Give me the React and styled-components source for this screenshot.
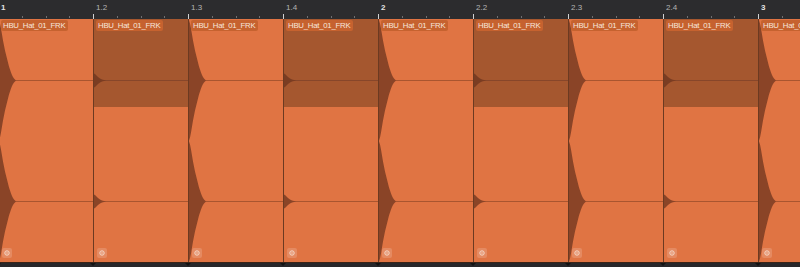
import React from "react";
import styled, { createGlobalStyle } from "styled-components";

const BAR = 95;

const bars = ["1", "1.2", "1.3", "1.4", "2", "2.2", "2.3", "2.4", "3"];

const GlobalStyle = createGlobalStyle`
  html, body {
    margin: 0;
    padding: 0;
    background: #2b2b2d;
    overflow: hidden;
  }
  body {
    font-family: "Liberation Sans", Arial, sans-serif;
  }
`;

const Arrange = styled.div`
  width: 800px;
  height: 267px;
  display: flex;
  flex-direction: column;
  overflow: hidden;
  background: #2b2b2d;
`;

const Ruler = styled.div`
  height: 19px;
  display: flex;
  margin-left: -2px;
  flex: none;
  background: #2c2c2e;
`;

const RulerBar = styled.div`
  flex: 0 0 ${BAR}px;
  display: flex;
  flex-direction: column;
  justify-content: space-between;
`;

const BarNumber = styled.span`
  font-size: 8px;
  line-height: 1;
  padding: 4px 0 0 3px;
  color: ${(p) => (p.$main ? "#e4e4e4" : "#b4b4b4")};
  font-weight: ${(p) => (p.$main ? 700 : 400)};
`;

const Beats = styled.div`
  display: flex;
  height: 5px;
  align-items: flex-end;
`;

const Beat = styled.div`
  flex: 1;
  height: ${(p) => (p.$bar ? 5 : 2)}px;
  border-left: 1px solid ${(p) => (p.$bar ? "#d0d0d0" : "#707072")};
  margin-bottom: ${(p) => (p.$bar ? 0 : 1)}px;
`;

const Track = styled.div`
  height: 243px;
  display: flex;
  margin-left: -2px;
  flex: none;
  border-bottom: 1px solid #3a2418;
`;

const Clip = styled.div`
  flex: 0 0 ${BAR}px;
  position: relative;
  box-sizing: border-box;
  border-left: 1px solid #6c3a21;
  background: ${(p) =>
    p.$quiet
      ? "linear-gradient(to bottom, #a5572f 0 88px, #e07443 88px)"
      : "#e07443"};
`;

const Wave = styled.svg`
  display: block;
  width: 100%;
  height: 100%;
`;

const Label = styled.div`
  position: absolute;
  top: 1px;
  left: 2px;
  height: 11px;
  padding: 0 3px 0 2px;
  border-radius: 2px;
  background: #c6622f;
  color: #f6e6dc;
  font-size: 7.8px;
  letter-spacing: -0.25px;
  line-height: 11px;
  white-space: nowrap;
`;

const GearBox = styled.div`
  position: absolute;
  left: 3px;
  bottom: 4px;
  width: 10px;
  height: 10px;
  border-radius: 2px;
  background: rgba(255, 255, 255, 0.16);
  display: flex;
  align-items: center;
  justify-content: center;
`;

const Footer = styled.div`
  flex: 1;
  display: flex;
  margin-left: -2px;
  background: #27272a;
`;

const FootBar = styled.div`
  flex: 0 0 ${BAR}px;
  position: relative;
`;

const Notch = styled.div`
  position: absolute;
  left: -3px;
  top: 0;
  width: 0;
  height: 0;
  border-left: 3px solid transparent;
  border-right: 3px solid transparent;
  border-top: 3px solid #121212;
`;

// decay envelope of a hat hit: [x, distance from centre]
const loud = [
  [0, 60], [1, 57], [2, 52], [3, 46], [4, 40], [5, 35], [6, 30], [7, 26],
  [8, 22], [9, 18], [10, 14], [11, 11], [12, 8], [13, 5.5], [14, 3.5],
  [15, 2], [16, 1], [17, 0],
];
const soft = [
  [0, 7], [1, 6.5], [2, 5.5], [3, 4.5], [4, 3.5], [5, 2.8], [6, 2.1],
  [7, 1.6], [8, 1.1], [9, 0.7], [10, 0.4], [12, 0],
];

const hitPath = (pts, cy) => {
  const top = pts.map(([x, a]) => `${x},${cy - a}`);
  const bottom = [...pts].reverse().map(([x, a]) => `${x},${cy + a}`);
  return `M0,${cy} L${top.join(" L")} L${bottom.join(" L")} Z`;
};

const Waveform = ({ quiet }) => {
  const pts = quiet ? soft : loud;
  return (
    <Wave viewBox={`0 0 ${BAR - 1} 243`} preserveAspectRatio="none">
      <line x1="0" y1="61.5" x2={BAR} y2="61.5" stroke={quiet ? "#87462a" : "#a9552f"} strokeWidth="1" />
      <line x1="0" y1="182.5" x2={BAR} y2="182.5" stroke="#a9552f" strokeWidth="1" />
      <path d={hitPath(pts, 61.5)} fill={quiet ? "#7a3c22" : "#8a4427"} />
      <path d={hitPath(pts, 182.5)} fill="#8a4427" />
    </Wave>
  );
};

const Gear = () => (
  <GearBox>
    <svg width="6" height="6" viewBox="0 0 6 6">
      <circle cx="3" cy="3" r="2.2" fill="none" stroke="#f3d9cb" strokeWidth="1" />
      <circle cx="3" cy="3" r="0.7" fill="#f3d9cb" />
    </svg>
  </GearBox>
);

export default function App() {
  return (
    <>
      <GlobalStyle />
      <Arrange>
        <Ruler>
          {bars.map((b) => (
            <RulerBar key={b}>
              <BarNumber $main={!b.includes(".")}>{b}</BarNumber>
              <Beats>
                <Beat $bar />
                <Beat />
                <Beat />
                <Beat />
              </Beats>
            </RulerBar>
          ))}
        </Ruler>
        <Track>
          {bars.map((b, i) => (
            <Clip key={b} $quiet={i % 2 === 1}>
              <Waveform quiet={i % 2 === 1} />
              <Label>HBU_Hat_01_FRK</Label>
              <Gear />
            </Clip>
          ))}
        </Track>
        <Footer>
          {bars.map((b) => (
            <FootBar key={b}>
              <Notch />
            </FootBar>
          ))}
        </Footer>
      </Arrange>
    </>
  );
}
